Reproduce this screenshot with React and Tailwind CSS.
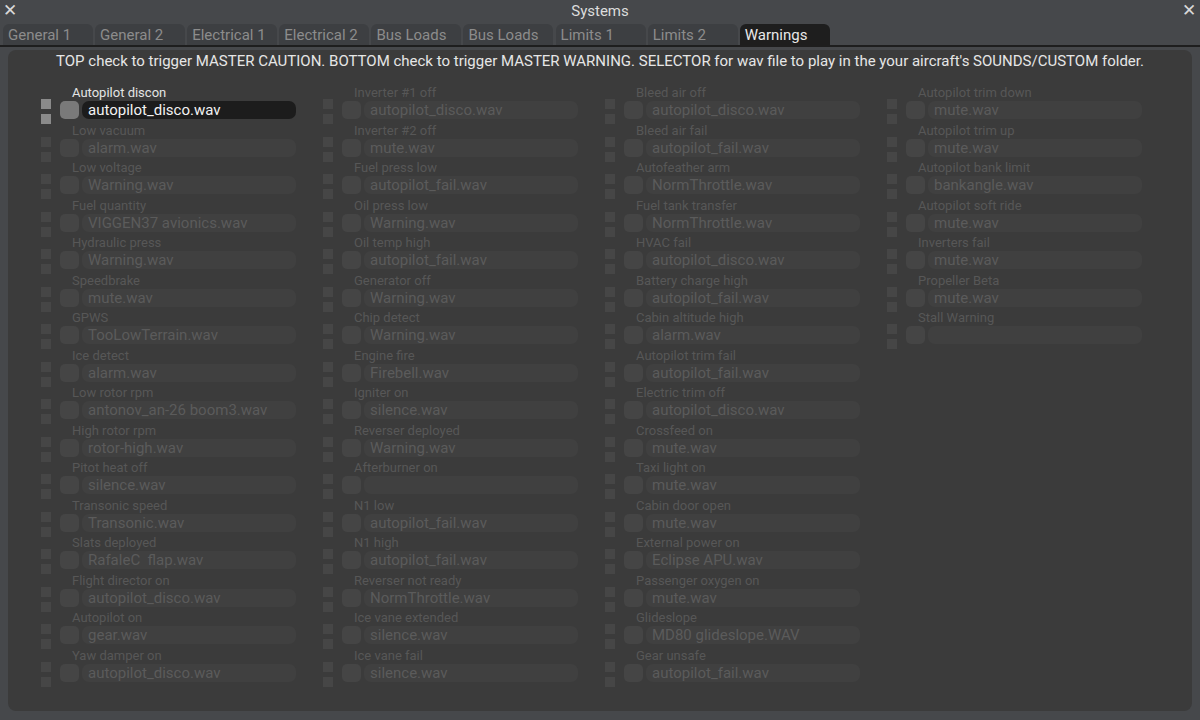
import React from "react";

const tabs = ["General 1","General 2","Electrical 1","Electrical 2","Bus Loads","Bus Loads","Limits 1","Limits 2","Warnings"];

const cols = [
  [
    ["Autopilot discon","autopilot_disco.wav"],
    ["Low vacuum","alarm.wav"],
    ["Low voltage","Warning.wav"],
    ["Fuel quantity","VIGGEN37 avionics.wav"],
    ["Hydraulic press","Warning.wav"],
    ["Speedbrake","mute.wav"],
    ["GPWS","TooLowTerrain.wav"],
    ["Ice detect","alarm.wav"],
    ["Low rotor rpm","antonov_an-26 boom3.wav"],
    ["High rotor rpm","rotor-high.wav"],
    ["Pitot heat off","silence.wav"],
    ["Transonic speed","Transonic.wav"],
    ["Slats deployed","RafaleC  flap.wav"],
    ["Flight director on","autopilot_disco.wav"],
    ["Autopilot on","gear.wav"],
    ["Yaw damper on","autopilot_disco.wav"],
  ],
  [
    ["Inverter #1 off","autopilot_disco.wav"],
    ["Inverter #2 off","mute.wav"],
    ["Fuel press low","autopilot_fail.wav"],
    ["Oil press low","Warning.wav"],
    ["Oil temp high","autopilot_fail.wav"],
    ["Generator off","Warning.wav"],
    ["Chip detect","Warning.wav"],
    ["Engine fire","Firebell.wav"],
    ["Igniter on","silence.wav"],
    ["Reverser deployed","Warning.wav"],
    ["Afterburner on",""],
    ["N1 low","autopilot_fail.wav"],
    ["N1 high","autopilot_fail.wav"],
    ["Reverser not ready","NormThrottle.wav"],
    ["Ice vane extended","silence.wav"],
    ["Ice vane fail","silence.wav"],
  ],
  [
    ["Bleed air off","autopilot_disco.wav"],
    ["Bleed air fail","autopilot_fail.wav"],
    ["Autofeather arm","NormThrottle.wav"],
    ["Fuel tank transfer","NormThrottle.wav"],
    ["HVAC fail","autopilot_disco.wav"],
    ["Battery charge high","autopilot_fail.wav"],
    ["Cabin altitude high","alarm.wav"],
    ["Autopilot trim fail","autopilot_fail.wav"],
    ["Electric trim off","autopilot_disco.wav"],
    ["Crossfeed on","mute.wav"],
    ["Taxi light on","mute.wav"],
    ["Cabin door open","mute.wav"],
    ["External power on","Eclipse APU.wav"],
    ["Passenger oxygen on","mute.wav"],
    ["Glideslope","MD80 glideslope.WAV"],
    ["Gear unsafe","autopilot_fail.wav"],
  ],
  [
    ["Autopilot trim down","mute.wav"],
    ["Autopilot trim up","mute.wav"],
    ["Autopilot bank limit","bankangle.wav"],
    ["Autopilot soft ride","mute.wav"],
    ["Inverters fail","mute.wav"],
    ["Propeller Beta","mute.wav"],
    ["Stall Warning",""],
  ],
];

function Item({ label, file, active }) {
  return (
    <div className="flex h-[37.5px] items-start">
      <div className="flex w-[10px] flex-col gap-[5px] pt-[14px]">
        <div className={"h-[10px] w-[10px] " + (active ? "bg-[#8a8a8a]" : "bg-[#464646]")} />
        <div className={"h-[10px] w-[10px] " + (active ? "bg-[#8a8a8a]" : "bg-[#464646]")} />
      </div>
      <div className="ml-[9px] flex flex-col">
        <div className={"h-[16px] whitespace-pre pl-[12px] text-[13px] leading-[16px] " + (active ? "text-[#e4e4e4]" : "text-[#575757]")}>
          {label}
        </div>
        <div className="flex items-center gap-[3px]">
          <div className={"h-[18px] w-[19px] rounded-[5px] " + (active ? "bg-[#7a7a7a]" : "bg-[#454545]")} />
          <div className={"flex h-[18px] w-[214px] items-center rounded-[7px] pl-[6px] text-[15px] leading-[18px] whitespace-pre " + (active ? "bg-[#1c1c1c] text-[#f2f2f2]" : "bg-[#404040] text-[#5b5b5b]")}>
            {file}
          </div>
        </div>
      </div>
    </div>
  );
}

export default function App() {
  return (
    <div className="flex h-[720px] w-[1200px] flex-col overflow-hidden bg-[#46484b]" style={{ fontFamily: "Roboto, 'Noto Sans', sans-serif" }}>
      <div className="relative flex h-[22px] items-center justify-center">
        <span className="absolute left-[3px] top-[0px] text-[17px] leading-[20px] text-[#d8d8d8]">✕</span>
        <span className="text-[15px] text-[#dcdcdc]">Systems</span>
        <span className="absolute right-[4px] top-[0px] text-[17px] leading-[20px] text-[#d8d8d8]">✕</span>
      </div>
      <div className="flex h-[25px] items-end gap-[2.1px] border-b-2 border-[#1e1e1e] pl-[3px] pt-[2px]">
        {tabs.map((t, i) => (
          <div
            key={i}
            className={"flex h-[21px] w-[90px] items-center rounded-t-[6px] pl-[5px] pt-[2px] text-[15px] leading-[19px] " + (i === 8 ? "bg-[#1e1e1e] text-[#e8e8e8]" : "bg-[#3d3f42] text-[#8c8c8c]")}
          >
            {t}
          </div>
        ))}
      </div>
      <div className="mx-[8px] mb-[9px] mt-[3px] flex flex-1 flex-col rounded-[8px] bg-[#3b3b3b]">
        <div className="h-[22px] text-center text-[15px] leading-[22px] text-[#e6e6e6]">
          TOP check to trigger MASTER CAUTION. BOTTOM check to trigger MASTER WARNING. SELECTOR for wav file to play in the your aircraft's SOUNDS/CUSTOM folder.
        </div>
        <div className="mt-[13px] flex pl-[33px]">
          {cols.map((col, ci) => (
            <div key={ci} className="flex w-[282px] flex-col">
              {col.map(([l, f], ri) => (
                <Item key={ri} label={l} file={f} active={ci === 0 && ri === 0} />
              ))}
            </div>
          ))}
        </div>
      </div>
    </div>
  );
}
